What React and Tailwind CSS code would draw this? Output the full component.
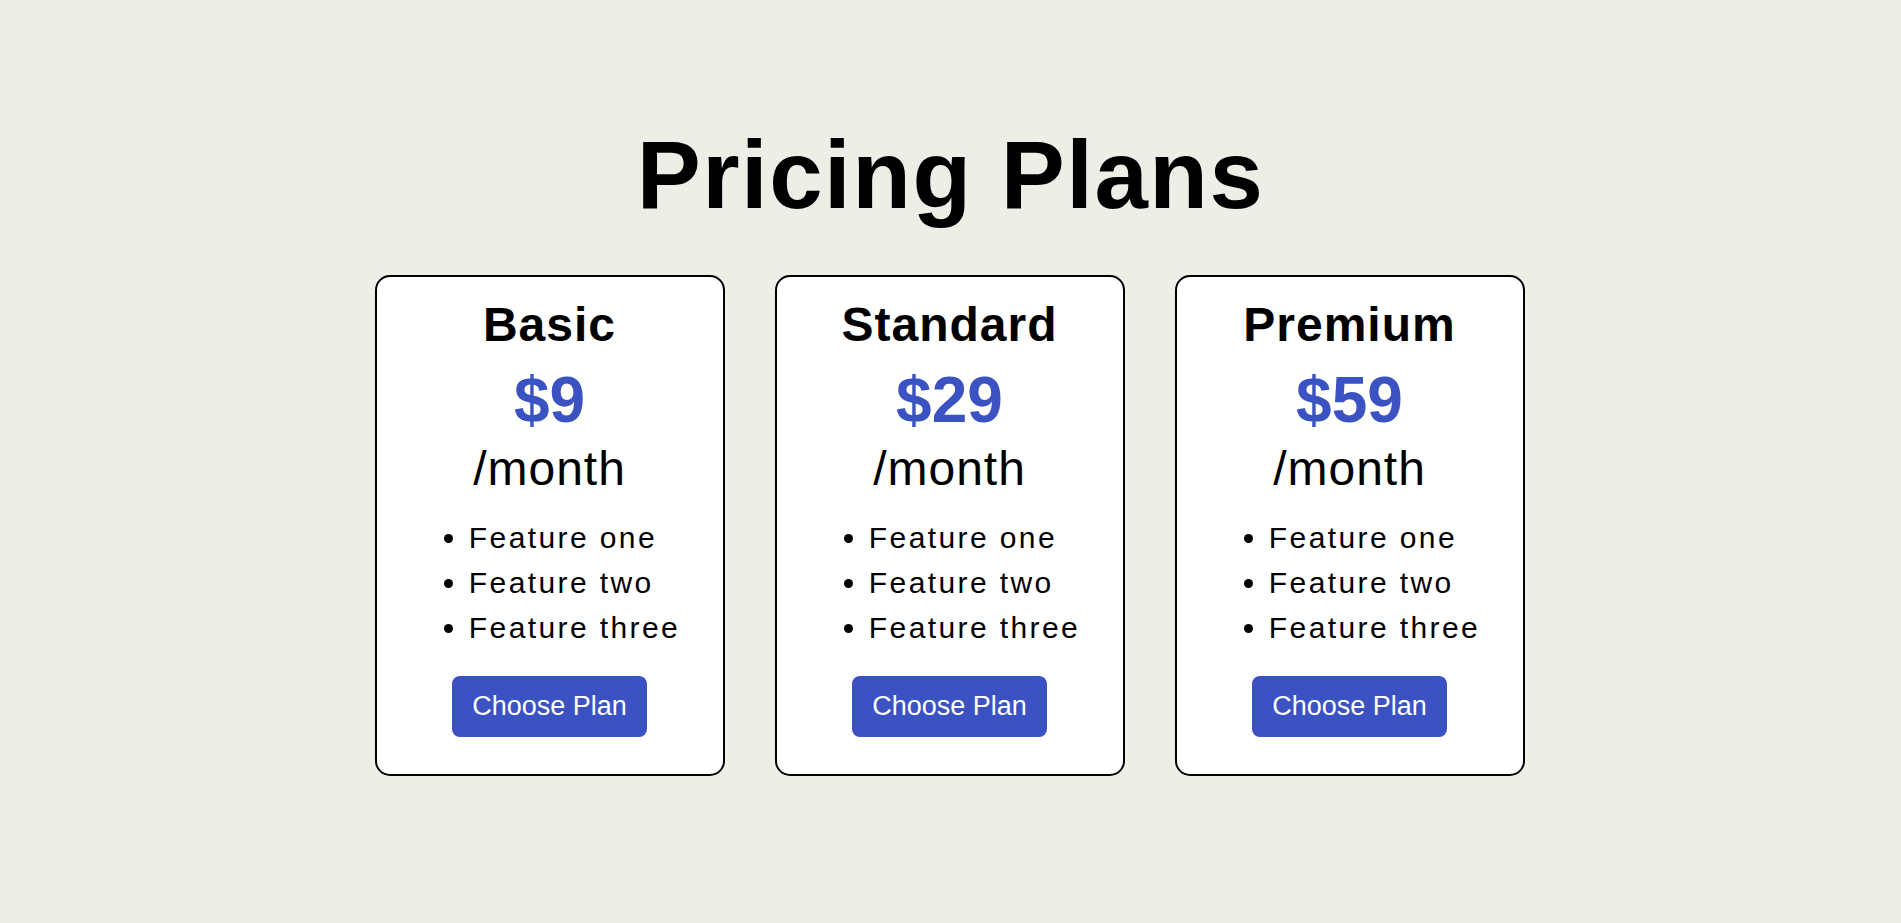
const plans = [
    { name: 'Basic', price: '$9' },
    { name: 'Standard', price: '$29' },
    { name: 'Premium', price: '$59' },
]

const features = ['Feature one', 'Feature two', 'Feature three']

function PlanCard({ name, price }) {
    return (
        <div className="w-[350px] bg-white border-2 border-black rounded-[15px] pt-[20px] pb-[37px] flex flex-col items-center text-center">
            <h2 className="text-[48px] font-bold leading-[1.15] tracking-[1px] text-black">{name}</h2>
            <p className="mt-[11px] text-[64px] font-bold leading-[1.15] text-[#3b53c2]">{price}</p>
            <p className="mt-[4px] text-[48px] leading-[1.15] tracking-[1px] text-black">/month</p>
            <ul className="mt-[19px] w-fit pl-[50px] list-disc text-left text-[30px] leading-[45px] tracking-[2.4px] text-black">
                {features.map(f => (
                    <li key={f}>{f}</li>
                ))}
            </ul>
            <button className="mt-[26px] w-[195px] h-[61px] rounded-[8px] bg-[#3b53c2] text-white text-[27px] tracking-normal leading-none">
                Choose Plan
            </button>
        </div>
    )
}

export default function App() {
    return (
        <div className="min-h-screen bg-[#eeede6] flex flex-col items-center pt-[120px] font-['Liberation_Sans',Arial,sans-serif]">
            <h1 className="text-[96px] font-bold leading-[1.15] tracking-[1.5px] text-black">Pricing Plans</h1>
            <div className="mt-[45px] flex justify-center gap-[50px] pr-[2px]">
                {plans.map(p => (
                    <PlanCard key={p.name} name={p.name} price={p.price} />
                ))}
            </div>
        </div>
    )
}
